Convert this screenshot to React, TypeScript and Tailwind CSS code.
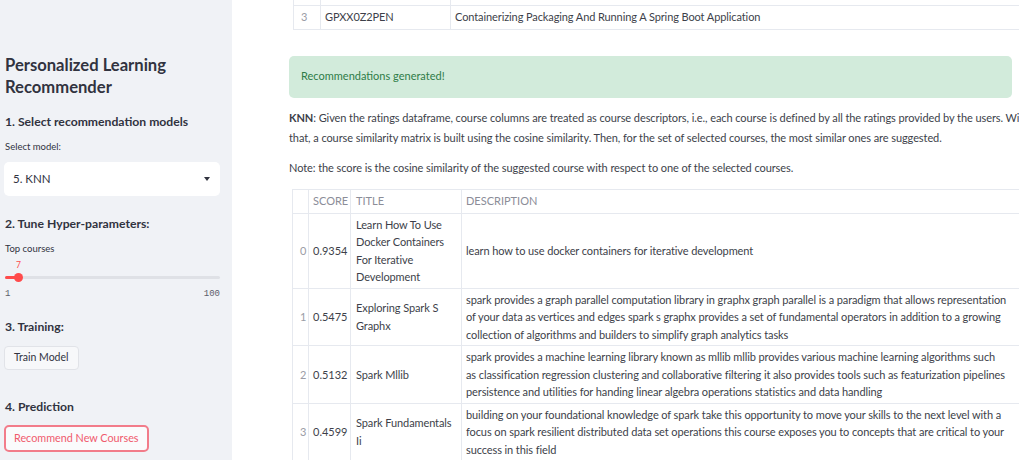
const font = "font-['Lato','Open_Sans',sans-serif]";

const rows = [
  {
    idx: 0,
    score: '0.9354',
    title: ['Learn How To Use', 'Docker Containers', 'For Iterative', 'Development'],
    desc: ['learn how to use docker containers for iterative development'],
  },
  {
    idx: 1,
    score: '0.5475',
    title: ['Exploring Spark S', 'Graphx'],
    desc: [
      'spark provides a graph parallel computation library in graphx graph parallel is a paradigm that allows representation',
      'of your data as vertices and edges spark s graphx provides a set of fundamental operators in addition to a growing',
      'collection of algorithms and builders to simplify graph analytics tasks',
    ],
  },
  {
    idx: 2,
    score: '0.5132',
    title: ['Spark Mllib'],
    desc: [
      'spark provides a machine learning library known as mllib mllib provides various machine learning algorithms such',
      'as classification regression clustering and collaborative filtering it also provides tools such as featurization pipelines',
      'persistence and utilities for handing linear algebra operations statistics and data handling',
    ],
  },
  {
    idx: 3,
    score: '0.4599',
    title: ['Spark Fundamentals', 'Ii'],
    desc: [
      'building on your foundational knowledge of spark take this opportunity to move your skills to the next level with a',
      'focus on spark resilient distributed data set operations this course exposes you to concepts that are critical to your',
      'success in this field',
    ],
  },
];

function Lines({ lines }: { lines: string[] }) {
  return (
    <>
      {lines.map((l) => (
        <div key={l} className="whitespace-nowrap">
          {l}
        </div>
      ))}
    </>
  );
}

function Sidebar() {
  return (
    <aside className="w-[232px] shrink-0 h-full bg-[#f0f2f6] pl-[5px] pr-[12px] text-[#31333f]">
      <h1 className="mt-[54px] text-[16.6px] leading-[22px] font-bold">
        Personalized Learning
        <br />
        Recommender
      </h1>
      <h3 className="mt-[15px] text-[12.2px] leading-[18px] font-bold">1. Select recommendation models</h3>
      <p className="mt-[9px] text-[9.5px] leading-[14px]">Select model:</p>
      <div className="mt-[8px] -ml-[1px] h-[34px] rounded-[5px] bg-white flex items-center justify-between pl-[9px] pr-[10px] text-[11.5px]">
        <span>5. KNN</span>
        <span className="w-0 h-0 border-l-[3px] border-r-[3px] border-t-[4px] border-l-transparent border-r-transparent border-t-[#31333f]" />
      </div>
      <h3 className="mt-[19px] text-[12.2px] leading-[18px] font-bold">2. Tune Hyper-parameters:</h3>
      <p className="mt-[9px] text-[9.5px] leading-[14px]">Top courses</p>
      <p className="mt-[3px] pl-[11px] text-[8.5px] leading-[12px] text-[#ff4b4b]">7</p>
      <div className="mt-[1px] h-[10px] relative flex items-center">
        <div className="w-full h-[3px] rounded-full bg-[#dfe1e6]" />
        <div className="absolute left-0 w-[14px] h-[3px] rounded-full bg-[#ff4b4b]" />
        <div className="absolute left-[9px] w-[9px] h-[9px] rounded-full bg-[#ff4b4b]" />
      </div>
      <div className="mt-[6px] flex justify-between text-[9px] leading-[12px] font-['Liberation_Mono',monospace] text-[#5c5f6b]">
        <span>1</span>
        <span>100</span>
      </div>
      <h3 className="mt-[18px] text-[12.2px] leading-[18px] font-bold">3. Training:</h3>
      <button className="mt-[10px] -ml-[1px] h-[24px] px-[9px] rounded-[4px] border border-[#e1e3e8] bg-[#f7f8fa] text-[10.5px] text-[#31333f]">
        Train Model
      </button>
      <h3 className="mt-[28px] text-[12.2px] leading-[18px] font-bold">4. Prediction</h3>
      <button className="mt-[9px] -ml-[1px] h-[27px] px-[8px] rounded-[5px] border-2 border-[#f27c8a] bg-[#fafbfc] text-[10.8px] text-[#f05a6c]">
        Recommend New Courses
      </button>
    </aside>
  );
}

export default function App() {
  return (
    <div className={`w-[1019px] h-[460px] overflow-hidden flex bg-white ${font}`}>
      <Sidebar />
      <main className="shrink-0 w-[780px] pl-[57px] text-[#31333f]">
        <table className="ml-[4px] w-[760px] border-collapse text-[11px] tracking-[-0.1px] text-[#3d3f4a]">
          <tbody>
            <tr className="h-[5px]">
              <td className="w-[27px] border-x border-[#e6e9ef]" />
              <td className="w-[130px] border-x border-[#e6e9ef]" />
              <td className="border-x border-[#e6e9ef]" />
            </tr>
            <tr className="h-[24px]">
              <td className="border border-[#e6e9ef] pl-[7px] text-[#9a9ca6]">3</td>
              <td className="border border-[#e6e9ef] pl-[4px]">GPXX0Z2PEN</td>
              <td className="border border-[#e6e9ef] pl-[4px]">Containerizing Packaging And Running A Spring Boot Application</td>
            </tr>
          </tbody>
        </table>

        <div className="mt-[26px] h-[42px] rounded-[5px] bg-[#d2ebdb] flex items-center pl-[12px] text-[11px] text-[#2f7c48]">
          Recommendations generated!
        </div>

        <div className="mt-[10px] text-[11px] tracking-[-0.08px] leading-[20px] text-[#3d3f4a] whitespace-nowrap">
          <p>
            <b>KNN</b>: Given the ratings dataframe, course columns are treated as course descriptors, i.e., each course is defined by all the ratings provided by the users. With
          </p>
          <p>that, a course similarity matrix is built using the cosine similarity. Then, for the set of selected courses, the most similar ones are suggested.</p>
          <p className="mt-[10px]">Note: the score is the cosine similarity of the suggested course with respect to one of the selected courses.</p>
        </div>

        <table className="mt-[11px] ml-[3px] w-[800px] border-collapse text-[11px] tracking-[-0.1px] leading-[17.5px] text-[#3d3f4a]">
          <thead>
            <tr className="h-[24px] text-left text-[#8b8d98]">
              <th className="w-[16px] border border-[#e6e9ef] font-normal" />
              <th className="w-[42px] border border-[#e6e9ef] font-normal pl-[4px] tracking-normal">SCORE</th>
              <th className="w-[111px] border border-[#e6e9ef] font-normal pl-[5px] tracking-normal">TITLE</th>
              <th className="border border-[#e6e9ef] font-normal pl-[4px] tracking-normal">DESCRIPTION</th>
            </tr>
          </thead>
          <tbody>
            {rows.map((r) => (
              <tr key={r.idx}>
                <td className="border border-[#e6e9ef] py-[2px] pl-[7px] text-[#9a9ca6] align-middle">{r.idx}</td>
                <td className="border border-[#e6e9ef] py-[2px] pl-[4px] align-middle tracking-normal">{r.score}</td>
                <td className="border border-[#e6e9ef] py-[2px] pl-[5px] align-middle">
                  <Lines lines={r.title} />
                </td>
                <td className="border border-[#e6e9ef] py-[2px] pl-[4px] align-middle">
                  <Lines lines={r.desc} />
                </td>
              </tr>
            ))}
          </tbody>
        </table>
      </main>
    </div>
  );
}
